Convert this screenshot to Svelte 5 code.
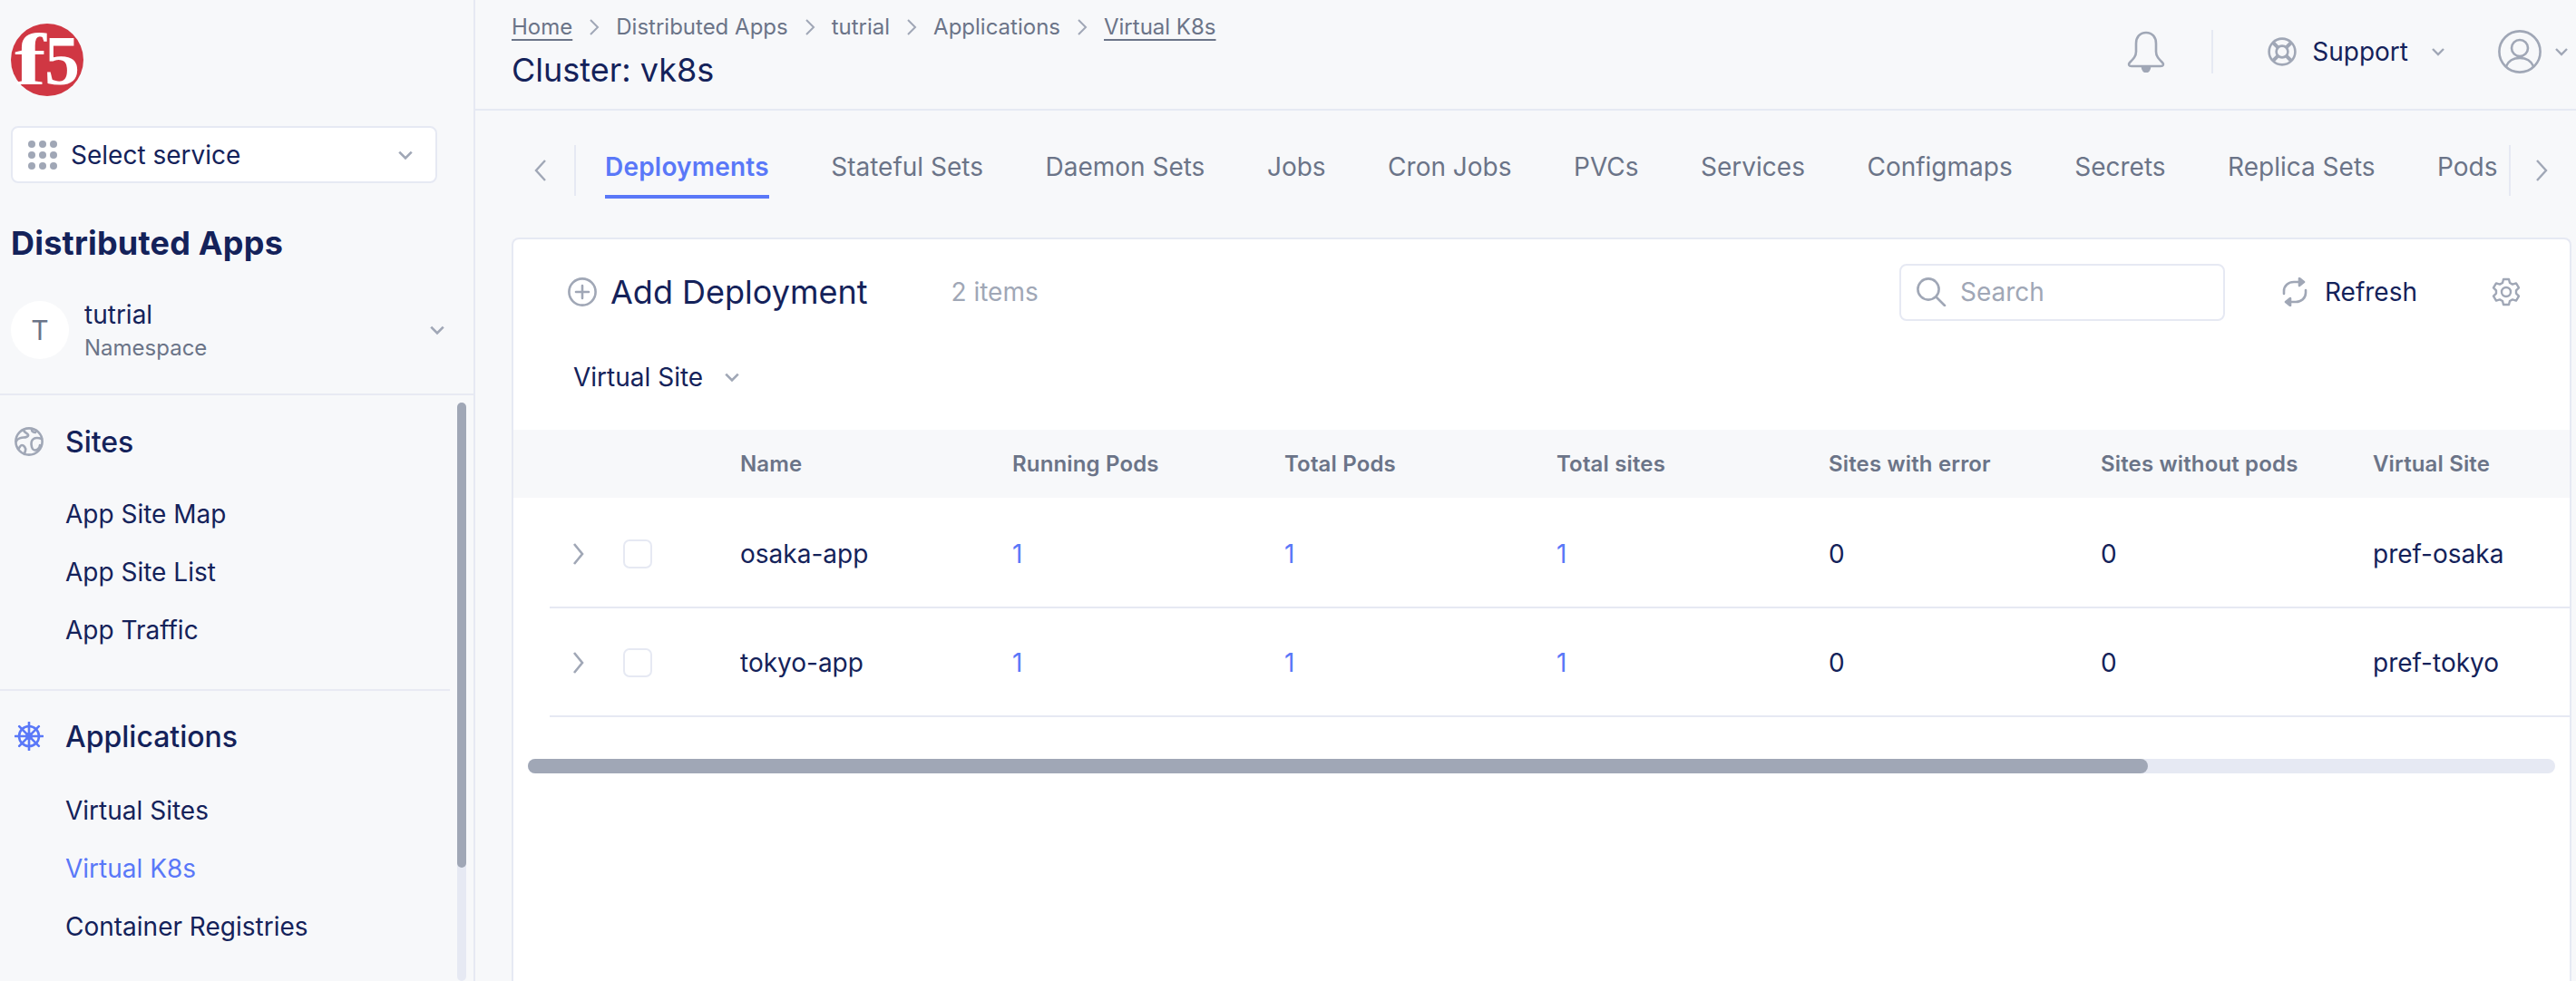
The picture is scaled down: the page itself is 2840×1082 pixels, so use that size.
<script>
	const sites = ['App Site Map', 'App Site List', 'App Traffic'];
	const apps = ['Virtual Sites', 'Virtual K8s', 'Container Registries'];
	const crumbs = [
		{ label: 'Home', link: true },
		{ label: 'Distributed Apps' },
		{ label: 'tutrial' },
		{ label: 'Applications' },
		{ label: 'Virtual K8s', link: true }
	];
	const tabs = ['Deployments', 'Stateful Sets', 'Daemon Sets', 'Jobs', 'Cron Jobs', 'PVCs', 'Services', 'Configmaps', 'Secrets', 'Replica Sets', 'Pods'];
	const columns = ['Name', 'Running Pods', 'Total Pods', 'Total sites', 'Sites with error', 'Sites without pods', 'Virtual Site'];
	const rows = [
		{ name: 'osaka-app', site: 'pref-osaka' },
		{ name: 'tokyo-app', site: 'pref-tokyo' }
	];
	const dots = [0, 1, 2, 3, 4, 5, 6, 7, 8];
</script>

{#snippet chevron(size = 16)}
	<svg class="chev" width={size} height={size} viewBox="0 0 16 16"><path d="M2 5l6 6 6-6" /></svg>
{/snippet}

<div class="page">
	<aside class="sidebar">
		<div class="top">
			<svg class="logo" width="80" height="80" viewBox="0 0 80 80">
				<circle cx="40" cy="40" r="40" fill="#d03743" />
				<text x="0" y="67" class="logo-f" transform="translate(4 0) scale(1.3 1)">f</text>
				<text x="37" y="67" class="logo-5">5</text>
			</svg>
			<div class="select">
				<div class="dots">
					{#each dots as d}
						<span class="dot"></span>
					{/each}
				</div>
				<span class="select-label">Select service</span>
				{@render chevron(18)}
			</div>
			<h1 class="title">Distributed Apps</h1>
			<div class="namespace">
				<div class="avatar">T</div>
				<div class="ns-text">
					<div class="ns-name">tutrial</div>
					<div class="ns-sub">Namespace</div>
				</div>
				{@render chevron(18)}
			</div>
		</div>
		<div class="nav-wrap">
			<nav class="nav">
				<section class="group first">
					<div class="group-head">
						<svg width="32" height="32" viewBox="0 0 32 32" fill="none" stroke="#a0a7b6" stroke-width="2.6" stroke-linejoin="round" stroke-linecap="round">
							<circle cx="16" cy="16" r="14.6" />
							<path d="M10 3.5c1 3 4 3 5 5s-3 3-5 3-7 1-8 4M4 24c2-1 2-4 4-4s5 3 4 6-1 4-1 4" />
							<path d="M30 13c-3-1-6-2-9 0s-3 5-2 9 4 4 6 3 3-3 3-5" />
							<path d="M19 3c0 2 2 3 4 3" />
						</svg>
						<span>Sites</span>
					</div>
					{#each sites as s}
						<div class="item">{s}</div>
					{/each}
				</section>
				<section class="group second">
					<div class="group-head">
						<svg width="32" height="32" viewBox="0 0 32 32" fill="none" stroke="#5a78f8" stroke-width="2.6" stroke-linecap="round">
							<circle cx="16" cy="16" r="11" />
							<circle cx="16" cy="16" r="2.6" fill="#5a78f8" />
							<path d="M16 .8v30.4M.8 16h30.4M5.2 5.2l21.6 21.6M26.8 5.2L5.2 26.8" />
						</svg>
						<span>Applications</span>
					</div>
					{#each apps as a}
						<div class="item" class:active={a === 'Virtual K8s'}>{a}</div>
					{/each}
				</section>
			</nav>
			<div class="nav-scroll">
				<div class="nav-thumb"></div>
			</div>
		</div>
	</aside>

	<main class="main">
		<header class="header">
			<div class="head-left">
				<div class="crumbs">
					{#each crumbs as c, i}
						{#if i > 0}
							<svg class="crumb-sep" width="12" height="20" viewBox="0 0 12 20"><path d="M2 2l8 8-8 8" /></svg>
						{/if}
						<span class:crumb-link={c.link}>{c.label}</span>
					{/each}
				</div>
				<div class="cluster">Cluster: vk8s</div>
			</div>
			<div class="head-right">
				<svg class="bell" width="44" height="46" viewBox="0 0 44 46" fill="none" stroke="#a0a7b6" stroke-width="2.6" stroke-linejoin="round">
					<path d="M22 2c-7 0-11 5-11 12v9c0 5-3 8-7 12-2 2-1 4 2 4h32c3 0 4-2 2-4-4-4-7-7-7-12v-9c0-7-4-12-11-12z" />
					<path d="M18 40c0 3 2 5 4 5s4-2 4-5z" fill="#a0a7b6" />
				</svg>
				<span class="head-sep"></span>
				<div class="support">
					<svg width="32" height="32" viewBox="0 0 32 32" fill="none" stroke="#a0a7b6" stroke-width="2.6">
						<circle cx="16" cy="16" r="14.4" />
						<circle cx="16" cy="16" r="6.4" />
						<path d="M6 6l5.4 5.4M26 6l-5.4 5.4M6 26l5.4-5.4M26 26l-5.4-5.4" stroke-width="4" />
					</svg>
					<span>Support</span>
					{@render chevron(16)}
				</div>
				<div class="user">
					<svg width="48" height="48" viewBox="0 0 48 48" fill="none" stroke="#a0a7b6" stroke-width="2.6">
						<circle cx="24" cy="24" r="22.6" />
						<circle cx="24" cy="20" r="9" />
						<path d="M9 40c3-7 8-9 15-9s12 2 15 9" />
					</svg>
					{@render chevron(16)}
				</div>
			</div>
		</header>

		<div class="tabs">
			<button class="tab-arrow left" aria-label="Previous">
				<svg width="16" height="26" viewBox="0 0 16 26"><path d="M13 2L3 13l10 11" /></svg>
			</button>
			<div class="tab-list">
				{#each tabs as t, i}
					<span class="tab" class:tab-active={i === 0}>{t}</span>
				{/each}
			</div>
			<button class="tab-arrow right" aria-label="Next">
				<svg width="16" height="26" viewBox="0 0 16 26"><path d="M3 2l10 11L3 24" /></svg>
			</button>
		</div>

		<div class="card">
			<div class="toolbar">
				<div class="add">
					<svg width="32" height="32" viewBox="0 0 32 32" fill="none" stroke="#a0a7b6" stroke-width="2.6" stroke-linecap="round">
						<circle cx="16" cy="16" r="14.6" />
						<path d="M16 9v14M9 16h14" />
					</svg>
					<span>Add Deployment</span>
				</div>
				<span class="count">2 items</span>
				<div class="search">
					<svg width="34" height="32" viewBox="0 0 34 32" fill="none" stroke="#a0a7b6" stroke-width="2.6" stroke-linecap="round">
						<circle cx="14" cy="13" r="11.6" />
						<path d="M23 22l9 9" />
					</svg>
					<span>Search</span>
				</div>
				<div class="refresh">
					<svg width="30" height="32" viewBox="0 0 30 32" fill="none" stroke="#a0a7b6" stroke-width="2.6" stroke-linecap="round" stroke-linejoin="round">
						<path d="M3 18V15C3 9 8 5 14 5h10" />
						<path d="M20 1l5 4-5 4v-8z" fill="#a0a7b6" />
						<path d="M27 14v3c0 6-5 10-11 10H6" />
						<path d="M10 23l-5 4 5 4v-8z" fill="#a0a7b6" />
					</svg>
					<span>Refresh</span>
				</div>
				<svg class="gear" width="32" height="32" viewBox="0 0 32 32" fill="none" stroke="#a0a7b6" stroke-width="2.4" stroke-linejoin="round">
					<path d="M13 2h6l1 4 3 1.6 4-1.2 3 5-3 3v3.2l3 3-3 5-4-1.2L20 26l-1 4h-6l-1-4-3-1.6-4 1.2-3-5 3-3v-3.2l-3-3 3-5 4 1.2L12 6z" />
					<circle cx="16" cy="16" r="5" />
				</svg>
			</div>
			<div class="filter">
				<span>Virtual Site</span>
				{@render chevron(18)}
			</div>
			<div class="thead">
				{#each columns as c}
					<div class="col">{c}</div>
				{/each}
			</div>
			{#each rows as r}
				<div class="row">
					<svg class="expand" width="14" height="24" viewBox="0 0 14 24"><path d="M2 1l9 11-9 11" /></svg>
					<span class="check"></span>
					<div class="col">{r.name}</div>
					<div class="col num">1</div>
					<div class="col num">1</div>
					<div class="col num">1</div>
					<div class="col">0</div>
					<div class="col">0</div>
					<div class="col">{r.site}</div>
				</div>
			{/each}
			<div class="hscroll">
				<div class="hthumb"></div>
			</div>
		</div>
	</main>
</div>

<style>
	:global(body) {
		margin: 0;
		background: #f7f8fa;
	}
	.page {
		display: flex;
		height: 1082px;
		width: 2840px;
		overflow: hidden;
		font-family: Inter, 'Noto Sans', sans-serif;
		font-size: 28px;
		color: #14225a;
		background: #f7f8fa;
	}
	.sidebar {
		width: 522px;
		flex: none;
		display: flex;
		flex-direction: column;
		border-right: 2px solid #e6e9f3;
		background: #f7f8fa;
	}
	.top {
		padding: 26px 0 0 12px;
		border-bottom: 2px solid #e8eaf3;
		height: 408px;
		box-sizing: content-box;
	}
	.logo {
		display: block;
		overflow: visible;
	}
	.logo-f,
	.logo-5 {
		font-family: 'Liberation Serif', serif;
		font-weight: 700;
		fill: #fff;
	}
	.logo-f {
		font-size: 80px;
	}
	.logo-5 {
		font-size: 78px;
	}
	.select {
		margin-top: 33px;
		width: 470px;
		height: 63px;
		box-sizing: border-box;
		display: flex;
		align-items: center;
		padding: 0 24px 0 17px;
		background: #fff;
		border: 2px solid #e6e9f3;
		border-radius: 8px;
	}
	.dots {
		display: grid;
		grid-template-columns: repeat(3, 8px);
		gap: 4px;
		margin-right: 15px;
	}
	.dot {
		width: 8px;
		height: 8px;
		border-radius: 50%;
		background: #a0a7b6;
	}
	.select-label {
		flex: 1;
	}
	.chev {
		flex: none;
		fill: none;
		stroke: #a0a7b6;
		stroke-width: 2.4;
	}
	.title {
		margin: 42px 0 0;
		font-size: 36px;
		line-height: 48px;
		font-weight: 700;
		letter-spacing: 0.2px;
	}
	.namespace {
		margin-top: 40px;
		height: 64px;
		display: flex;
		align-items: center;
		padding-right: 31px;
	}
	.avatar {
		width: 64px;
		height: 64px;
		border-radius: 50%;
		background: #fff;
		color: #6b7488;
		font-size: 30px;
		display: flex;
		align-items: center;
		justify-content: center;
		margin-right: 17px;
	}
	.ns-text {
		flex: 1;
	}
	.ns-name {
		line-height: 36px;
	}
	.ns-sub {
		margin-top: 3px;
		font-size: 24px;
		line-height: 32px;
		color: #6b7488;
	}
	.nav-wrap {
		flex: 1;
		display: flex;
		min-height: 0;
	}
	.nav {
		width: 496px;
		flex: none;
	}
	.group {
		padding-bottom: 33px;
		border-bottom: 2px solid #e8eaf3;
	}
	.group.first {
		padding-top: 31px;
	}
	.group.second {
		padding-top: 30px;
		border-bottom: 0;
	}
	.group-head {
		display: flex;
		align-items: center;
		gap: 24px;
		padding-left: 16px;
		height: 40px;
		font-size: 32px;
		font-weight: 500;
		margin-bottom: 28px;
	}
	.second .group-head {
		margin-bottom: 30px;
	}
	.item {
		height: 64px;
		line-height: 64px;
		padding-left: 72px;
	}
	.item.active {
		color: #5a78f8;
	}
	.nav-scroll {
		margin: 8px 0 0 8px;
		width: 10px;
		border-radius: 5px;
		background: #e6e9f3;
	}
	.nav-thumb {
		height: 513px;
		border-radius: 5px;
		background: #a0a7b6;
	}
	.main {
		flex: 1;
		min-width: 0;
		display: flex;
		flex-direction: column;
	}
	.header {
		height: 122px;
		box-sizing: border-box;
		flex: none;
		display: flex;
		justify-content: space-between;
		padding: 0 8px 0 40px;
		border-bottom: 2px solid #e6e9f3;
	}
	.crumbs {
		display: flex;
		align-items: center;
		font-size: 24px;
		line-height: 32px;
		height: 32px;
		margin-top: 14px;
		color: #6b7488;
	}
	.crumb-link {
		text-decoration: underline;
		text-underline-offset: 5px;
		text-decoration-thickness: 2px;
	}
	.crumb-sep {
		margin: 0 18px;
		fill: none;
		stroke: #a0a7b6;
		stroke-width: 2;
	}
	.cluster {
		margin-top: 11px;
		font-size: 36px;
		line-height: 40px;
	}
	.head-right {
		display: flex;
		align-items: center;
		height: 114px;
	}
	.head-sep {
		width: 2px;
		height: 48px;
		background: #e6e9f3;
		margin: 0 60px 0 50px;
	}
	.support {
		display: flex;
		align-items: center;
		gap: 17px;
		margin-right: 58px;
	}
	.support .chev {
		margin-left: 8px;
	}
	.user {
		display: flex;
		align-items: center;
		gap: 14px;
	}
	.tabs {
		height: 140px;
		flex: none;
		display: flex;
		align-items: flex-start;
		padding-top: 38px;
		box-sizing: border-box;
		padding-left: 64px;
	}
	.tab-arrow {
		all: unset;
		height: 56px;
		display: flex;
		align-items: center;
	}
	.tab-arrow svg {
		fill: none;
		stroke: #a0a7b6;
		stroke-width: 2.4;
	}
	.tab-arrow.left {
		padding: 0 29px 0 0;
		border-right: 2px solid #e6e9f3;
		margin-right: 32px;
	}
	.tab-arrow.right {
		padding-left: 26px;
		border-left: 2px solid #e6e9f3;
	}
	.tab-list {
		display: flex;
		gap: 68.5px;
		width: 2099px;
	}
	.tab {
		height: 59px;
		box-sizing: border-box;
		line-height: 49px;
		color: #6b7488;
		white-space: nowrap;
	}
	.tab-active {
		color: #5a78f8;
		font-weight: 600;
		letter-spacing: 0.2px;
		border-bottom: 4px solid #5a78f8;
	}
	.card {
		flex: 1;
		margin-right: 5px;
		margin-left: 40px;
		background: #fff;
		border: 2px solid #e6e9f3;
		border-bottom: 0;
		border-radius: 8px 8px 0 0;
		min-width: 0;
		overflow: hidden;
	}
	.toolbar {
		display: flex;
		align-items: center;
		height: 64px;
		margin-top: 26px;
		padding-left: 60px;
	}
	.add {
		display: flex;
		align-items: center;
		gap: 15px;
		font-size: 36px;
		margin-right: 92px;
	}
	.count {
		color: #a0a7b6;
		flex: 1;
	}
	.search {
		width: 359px;
		height: 63px;
		box-sizing: border-box;
		border: 2px solid #e6e9f3;
		border-radius: 8px;
		display: flex;
		align-items: center;
		gap: 15px;
		padding-left: 16px;
		color: #a0a7b6;
		margin-right: 62px;
	}
	.refresh {
		display: flex;
		align-items: center;
		gap: 18px;
		margin-right: 82px;
	}
	.gear {
		margin-right: 54px;
	}
	.filter {
		display: flex;
		align-items: center;
		gap: 23px;
		margin-top: 42px;
		padding-left: 66px;
		height: 40px;
	}
	.thead {
		margin-top: 38px;
		margin-bottom: 2px;
		height: 75px;
		display: flex;
		align-items: center;
		padding-left: 250px;
		background: #f7f8fa;
		font-size: 24px;
		font-weight: 600;
		letter-spacing: 0.15px;
		color: #6b7488;
	}
	.col {
		width: 300px;
		flex: none;
		white-space: nowrap;
	}
	.row {
		height: 120px;
		box-sizing: border-box;
		padding-top: 2px;
		display: flex;
		align-items: center;
		margin-left: 40px;
		border-bottom: 2px solid #e6e9f3;
	}
	.expand {
		margin-left: 25px;
		fill: none;
		stroke: #a0a7b6;
		stroke-width: 2.6;
		flex: none;
		margin-right: 42px;
	}
	.check {
		width: 32px;
		height: 32px;
		box-sizing: border-box;
		border: 2px solid #e6e9f3;
		border-radius: 7px;
		flex: none;
		margin-right: 97px;
	}
	.num {
		color: #5a78f8;
	}
	.hscroll {
		margin: 46px 16px 0 16px;
		height: 16px;
		border-radius: 8px;
		background: #e6e9f3;
	}
	.hthumb {
		width: 1786px;
		height: 16px;
		border-radius: 8px;
		background: #a0a7b6;
	}
</style>
